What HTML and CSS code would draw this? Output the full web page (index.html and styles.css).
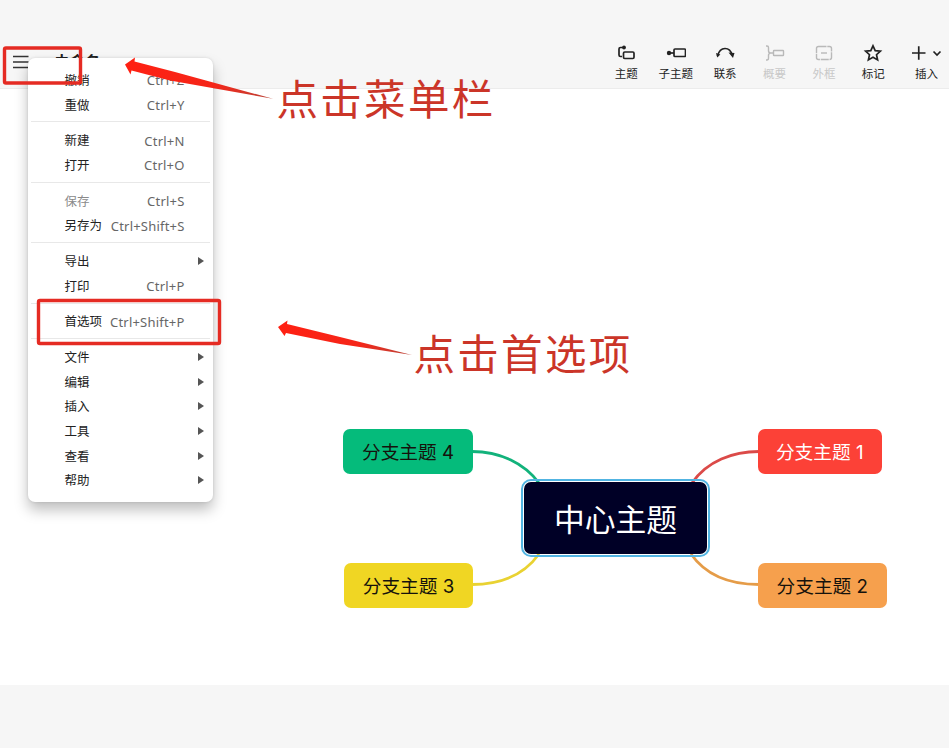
FILE: index.html
```html
<!DOCTYPE html>
<html lang="zh-CN">
<head>
<meta charset="utf-8">
<title>未命名</title>
<link rel="stylesheet" href="styles.css">
</head>
<body>
<div class="app">
  <header class="topbar">
    <div class="file">
      <svg class="burger" width="16" height="14" viewBox="0 0 16 14"><path d="M0 1.500h15.500M0 7h15.500M0 12.500h15.500"/></svg>
      <span class="title">未命名</span>
    </div>
    <nav class="tools">
      <div class="tool"><svg viewBox="0 0 20 20"><path d="M8.500 4.500H4.500Q3 4.500 3 6v6Q3 13.500 4.500 13.500H6"/><rect x="7.500" y="9" width="10.500" height="6.500" rx="1.200"/><circle class="dot" cx="8" cy="4.500" r="1.900"/></svg><span>主题</span></div>
      <div class="tool"><svg viewBox="0 0 20 20"><path d="M2 10h6"/><rect x="8" y="6" width="11.500" height="7.500" rx="1"/><circle class="dot" cx="3" cy="10" r="2.200"/></svg><span>子主题</span></div>
      <div class="tool"><svg viewBox="0 0 20 20"><path d="M2.500 13Q4.500 5.500 10 5.500T17 12"/><path class="dot" d="M13.500 9.500l6 .5-1.500 5zM1 10l4.400 1.500-3.200 3z"/></svg><span>联系</span></div>
      <div class="tool off"><svg viewBox="0 0 20 20"><path d="M1 3h1q1.500 0 1.500 1.500v3Q3.500 10 5.500 10q-2 0-2 2.500v2.500Q3.500 17 2 17H1M5.500 10h3"/><rect x="8.500" y="7.500" width="10" height="5" rx=".6"/></svg><span>概要</span></div>
      <div class="tool off"><svg viewBox="0 0 20 20"><rect x="2.500" y="3.500" width="15" height="13" rx="2" stroke-dasharray="8 .8"/><path d="M7 10h6"/></svg><span>外框</span></div>
      <div class="tool"><svg viewBox="0 0 20 20"><path d="M10 2.800l2.200 4.800 5.200.6-3.900 3.500 1.100 5.200-4.600-2.600-4.600 2.600 1.100-5.200-3.900-3.500 5.200-.6z"/></svg><span>标记</span></div>
      <div class="tool insert"><svg class="wide" viewBox="0 0 34 20"><path d="M3 10h13.500M9.750 3.300v13.400M24.500 8.500l3.500 3.500 3.500-3.500"/></svg><span>插入</span></div>
    </nav>
  </header>

  <main class="canvas">
    <svg class="links" width="949" height="596" viewBox="0 89 949 596">
      <path stroke="#12b27b" d="M472 451.500C500 451.500 524 463 539 483"/>
      <path stroke="#e9d232" d="M472 584.500C500 584.500 524 575 539 554"/>
      <path stroke="#db4a48" d="M759 451.500C733 451.500 707 461 692 483"/>
      <path stroke="#e59c48" d="M759 584.500C733 584.500 707 577 691 554"/>
    </svg>
    <div class="node n4">分支主题 4</div>
    <div class="node n3">分支主题 3</div>
    <div class="node n1">分支主题 1</div>
    <div class="node n2">分支主题 2</div>
    <div class="node center">中心主题</div>
  </main>
  <footer class="statusbar"></footer>

  <div class="menu">
    <div class="row"><span>撤销</span><kbd>Ctrl+Z</kbd></div>
    <div class="row"><span>重做</span><kbd>Ctrl+Y</kbd></div>
    <hr>
    <div class="row"><span>新建</span><kbd>Ctrl+N</kbd></div>
    <div class="row"><span>打开</span><kbd>Ctrl+O</kbd></div>
    <hr>
    <div class="row dim"><span>保存</span><kbd>Ctrl+S</kbd></div>
    <div class="row"><span>另存为</span><kbd>Ctrl+Shift+S</kbd></div>
    <hr>
    <div class="row sub"><span>导出</span></div>
    <div class="row"><span>打印</span><kbd>Ctrl+P</kbd></div>
    <hr>
    <div class="row"><span>首选项</span><kbd>Ctrl+Shift+P</kbd></div>
    <hr>
    <div class="row sub"><span>文件</span></div>
    <div class="row sub"><span>编辑</span></div>
    <div class="row sub"><span>插入</span></div>
    <div class="row sub"><span>工具</span></div>
    <div class="row sub"><span>查看</span></div>
    <div class="row sub"><span>帮助</span></div>
  </div>

  <svg class="marks" width="949" height="748" viewBox="0 0 949 748">
    <defs>
      <linearGradient id="fade"><stop offset="0" stop-color="#ff2012"/><stop offset=".6" stop-color="#f52619"/><stop offset="1" stop-color="#b94438"/></linearGradient>
    </defs>
    <rect x="4.500" y="48" width="76" height="35" rx="1.500"/>
    <rect x="38.500" y="300.500" width="181" height="43" rx="1.500"/>
    <path fill="url(#fade)" d="M125 64.500L135 57.500L134.500 61.500L175 72L273 98.800L170 80.500L131.500 70.500L130.500 74.500z"/>
    <path fill="url(#fade)" d="M278 327L287.500 320.500L287 324L340 337L412 355L340 344L286 333L284.500 336z"/>
  </svg>
  <div class="note note-menu">点击菜单栏</div>
  <div class="note note-prefs">点击首选项</div>
</div>
</body>
</html>
```
FILE: styles.css
```css
* { box-sizing: border-box; }
body {
  margin: 0;
  font-family: "Noto Sans", "Noto Sans CJK SC", sans-serif;
  color: #222;
  background: #f6f6f6;
}
.app {
  position: relative;
  display: flex;
  flex-direction: column;
  width: 949px;
  height: 748px;
  overflow: hidden;
}
.topbar {
  display: flex;
  justify-content: space-between;
  flex: none;
  height: 89px;
  border-bottom: 1px solid #ececec;
  background: #f6f6f6;
}
.file { display: flex; align-items: flex-start; gap: 25px; padding: 51px 0 0 13px; }
.burger { margin-top: 4px; fill: none; stroke: #333; stroke-width: 1.7; }
.title { font: 700 15.5px/20px "Noto Sans CJK SC", sans-serif; }
.tools { display: flex; padding-top: 43px; }
.tool {
  display: flex;
  flex-direction: column;
  align-items: center;
  width: 49.4px;
  font: 11.5px/20px "Noto Sans CJK SC", sans-serif;
  white-space: nowrap;
}
.tool svg { width: 20px; height: 20px; fill: none; stroke: #222; stroke-width: 1.7; }
.tool svg.wide { width: 34px; }
.tool .dot { fill: #222; stroke: none; }
.tool.off { color: #c8c8c8; }
.tool.off svg { stroke: #b9b9b9; stroke-width: 1.4; }
.tool.insert { width: 51px; }
.tool.insert svg { margin-left: 4px; }
.tool.insert span { margin-left: 6px; }
.canvas { position: relative; flex: none; height: 596px; background: #fff; }
.links { display: block; fill: none; stroke-width: 2.8; }
.statusbar { flex: 1; background: #f6f6f6; }

.node {
  position: absolute;
  display: flex;
  align-items: center;
  justify-content: center;
  height: 45px;
  padding-top: 3px;
  border-radius: 7px;
  color: #15120c;
  font: 18.7px/42px Inter, "Noto Sans CJK SC", sans-serif;
  white-space: pre;
}
.n4 { left: 343px; top: 340px; width: 130px; background: #05bb7b; }
.n3 { left: 344px; top: 473.500px; width: 129px; background: #f0d623; }
.n1 { left: 758px; top: 340px; width: 123.500px; background: #fc4137; color: #fff; }
.n2 { left: 758px; top: 473.500px; width: 128.500px; background: #f6a04d; }
.center {
  left: 524px;
  top: 393px;
  width: 183px;
  height: 72px;
  border-radius: 7px;
  background: #000026;
  color: #fff;
  font-size: 30.800px;
  outline: 2px solid #51b4e2;
  outline-offset: 1px;
}

.menu {
  position: absolute;
  left: 28px;
  top: 58px;
  width: 185px;
  height: 444px;
  padding: 9.700px 3px 0;
  border-radius: 7px;
  background: #fff;
  box-shadow: 0 8px 14px rgba(0, 0, 0, .25), 0 0 3px rgba(0, 0, 0, .12);
}
.row {
  display: flex;
  align-items: center;
  justify-content: space-between;
  height: 24.600px;
  padding: 0 25.500px 0 33.500px;
  font: 12.500px/24px "Noto Sans CJK SC", sans-serif;
  white-space: nowrap;
}
.row kbd { padding-top: 1px; color: #666; font: 13px/24px "Noto Sans", sans-serif; letter-spacing: .2px; }
.row.dim { color: #8a8a8a; }
.row.sub { padding-right: 6px; }
.row.sub::after {
  content: "";
  border: solid transparent;
  border-width: 4px 0 4px 6px;
  border-left-color: #555;
}
.menu hr { height: 1px; margin: 4.600px 0 5.600px; border: 0; background: #e8e8e8; }

.marks { position: absolute; left: 0; top: 0; }
.marks rect { fill: none; stroke: #e52b23; stroke-width: 3.400; }
.note {
  position: absolute;
  color: #cb3528;
  font: 41.500px/50px "Noto Sans CJK SC", sans-serif;
  letter-spacing: 2.300px;
  white-space: nowrap;
}
.note-menu { left: 276.500px; top: 71.500px; }
.note-prefs { left: 413.500px; top: 327px; }
```
